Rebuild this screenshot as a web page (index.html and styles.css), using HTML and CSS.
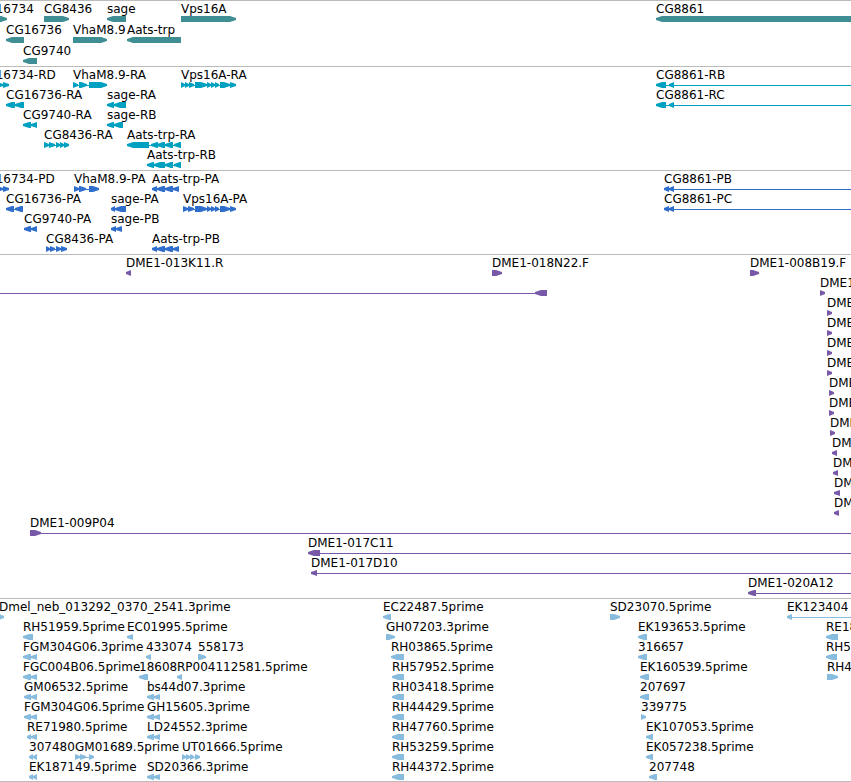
FILE: index.html
```html
<!DOCTYPE html>
<html lang="en">
<head>
<meta charset="utf-8">
<title>Genome browser</title>
<link rel="stylesheet" href="styles.css">
</head>
<body>
<main id="browser" class="browser"></main>
<script src="tracks.js"></script>
</body>
</html>
```
FILE: styles.css
```css
* {
  box-sizing: border-box;
}

body {
  margin: 0;
  background: #fff;
  color: #000;
  font: 12px/17px "DejaVu Sans", sans-serif;
}

.browser {
  overflow: hidden;
  border-bottom: 1px solid #bbb;
}

.track {
  border-top: 1px solid #bbb;
  padding-bottom: 3px;
}

.genes {
  color: #3f8e94;
  padding-bottom: 2px;
}

.transcripts {
  color: #00a0c0;
}

.proteins {
  color: #306ecb;
}

.clones {
  color: #7859a8;
}

.reads {
  color: #88bcde;
  padding-bottom: 2px;
}

.row {
  position: relative;
  height: 20px;
}

.genes .row {
  height: 21px;
}

/* Features sit at their own coordinate along the sequence. */
.feature {
  position: absolute;
  top: 0;
}

.label {
  display: block;
  height: 15px;
  color: #000;
  white-space: nowrap;
}

.glyph {
  display: block;
  height: 6px;
  fill: currentColor;
  overflow: hidden;
}
```
FILE: tracks.js
```js
// Feature: [name, strand, blocks, end of the connecting line (optional), start of the line (optional)]
const FAR = 2400;
const vps = [[195, 207], [207, 211], [211, 215], [215, 219], [220, 230], [230, 236]];
const aats = [[152, 157], [157, 165], [165, 173], [173, 179]];
const pair = [[147, 154], [154, 160]];
const rh = [[392, 404]];

const tracks = [
  { kind: "genes", rows: [
    [["CG16734", ">", [[-22, 7]]], ["CG8436", ">", [[44, 69]]], ["sage", "<", [[107, 126]]], ["Vps16A", ">", [[181, 236]]], ["CG8861", "<", [[656, FAR]]]],
    [["CG16736", "<", [[6, 24]]], ["VhaM8.9", ">", [[73, 107]]], ["Aats-trp", "<", [[127, 181]]]],
    [["CG9740", "<", [[23, 37]]]]
  ] },
  { kind: "transcripts", rows: [
    [["CG16734-RD", ">", [[-22, 3], [3, 9]]], ["VhaM8.9-RA", ">", [[73, 78], [79, 87], [89, 107]]], ["Vps16A-RA", ">", [[181, 185], [185, 189], [189, 194], ...vps]], ["CG8861-RB", "<", [[656, 666], [669, 674]], FAR]],
    [["CG16736-RA", "<", [[6, 15], [15, 24]]], ["sage-RA", "<", [[107, 114], [114, 126]]], ["CG8861-RC", "<", [[656, 666], [669, 674]], FAR]],
    [["CG9740-RA", "<", [[23, 31], [31, 37]]], ["sage-RB", "<", [[107, 114], [114, 123]]]],
    [["CG8436-RA", ">", [[44, 49], [49, 55], [56, 60], [60, 64], [64, 69]]], ["Aats-trp-RA", "<", [[127, 149], [151, 158], [157, 165], [165, 173], [174, 181]]]],
    [["Aats-trp-RB", "<", [[147, 154], [154, 165], [165, 173], [174, 181]]]]
  ] },
  { kind: "proteins", rows: [
    [["CG16734-PD", ">", [[-22, 3], [3, 9]]], ["VhaM8.9-PA", ">", [[74, 79], [79, 86], [89, 99]]], ["Aats-trp-PA", "<", aats], ["CG8861-PB", "<", [[664, 669], [669, 674]], FAR]],
    [["CG16736-PA", "<", [[6, 14], [15, 23]]], ["sage-PA", "<", [[111, 115], [115, 126]]], ["Vps16A-PA", ">", [[183, 188], [188, 194], ...vps]], ["CG8861-PC", "<", [[664, 669], [669, 674]], FAR]],
    [["CG9740-PA", "<", [[24, 31], [31, 37]]], ["sage-PB", "<", [[111, 116], [116, 122]]]],
    [["CG8436-PA", ">", [[46, 50], [50, 55], [56, 61], [61, 67]]], ["Aats-trp-PB", "<", aats]]
  ] },
  { kind: "clones", rows: [
    [["DME1-013K11.R", "<", [[126, 131]]], ["DME1-018N22.F", ">", [[492, 502]]], ["DME1-008B19.F", ">", [[750, 759]]]],
    [["", "<", [[535, 547]], 547, -10], ["DME1", ">", [[820, 825]]]],
    [["DME1", ">", [[827, 832]]]],
    [["DME1", ">", [[827, 832]]]],
    [["DME1", ">", [[827, 832]]]],
    [["DME1", ">", [[827, 832]]]],
    [["DME1", ">", [[829, 834]]]],
    [["DME1", ">", [[829, 834]]]],
    [["DME1", ">", [[830, 835]]]],
    [["DME1", "<", [[832, 837]]]],
    [["DME1", "<", [[833, 838]]]],
    [["DME1", "<", [[834, 840]]]],
    [["DME1", "<", [[834, 839]]]],
    [["DME1-009P04", ">", [[30, 41]], FAR]],
    [["DME1-017C11", "<", [[308, 320]], FAR]],
    [["DME1-017D10", "<", [[311, 317]], FAR]],
    [["DME1-020A12", "<", [[748, 756]], FAR]]
  ] },
  { kind: "reads", rows: [
    [["Dmel_neb_013292_0370_2541.3prime", ">", [[-1, 4]]], ["EC22487.5prime", "<", [[383, 391]]], ["SD23070.5prime", ">", [[610, 620]]], ["EK123404", "<", [[787, 792]], FAR]],
    [["RH51959.5prime", "<", [[23, 33]]], ["EC01995.5prime", "<", [[127, 133]]], ["GH07203.3prime", ">", [[386, 395]]], ["EK193653.5prime", "<", [[638, 647]]], ["RE18", "<", [[826, 838]]]],
    [["FGM304G06.3prime", "<", [[23, 31], [31, 37]]], ["433074", "<", [[146, 151]]], ["558173", ">", [[198, 206]]], ["RH03865.5prime", "<", [[391, 404]]], ["316657", "<", [[638, 647]]], ["RH5", "<", [[826, 837]]]],
    [["FGC004B06.5prime", "<", [[23, 31], [31, 37]]], ["18608", "<", [[139, 148]]], ["RP004112581.5prime", "<", [[177, 182]]], ["RH57952.5prime", "<", rh], ["EK160539.5prime", "<", [[640, 649]]], ["RH4", ">", [[827, 838]]]],
    [["GM06532.5prime", "<", [[24, 31], [31, 37]]], ["bs44d07.3prime", "<", pair], ["RH03418.5prime", "<", rh], ["207697", "<", [[640, 649]]]],
    [["FGM304G06.5prime", "<", [[24, 31], [31, 37]]], ["GH15605.3prime", "<", pair], ["RH44429.5prime", "<", rh], ["339775", ">", [[641, 646]]]],
    [["RE71980.5prime", "<", [[27, 31], [31, 37]]], ["LD24552.3prime", "<", pair], ["RH47760.5prime", "<", rh], ["EK107053.5prime", "<", [[646, 653]]]],
    [["307480", "<", [[29, 33], [33, 37]]], ["GM01689.5prime", ">", [[75, 80], [80, 86], [89, 94]]], ["UT01666.5prime", ">", [[182, 186], [186, 190], [190, 194], [195, 200]]], ["RH53259.5prime", "<", rh], ["EK057238.5prime", "<", [[646, 653]]]],
    [["EK187149.5prime", "<", [[29, 33], [33, 37]]], ["SD20366.3prime", "<", pair], ["RH44372.5prime", "<", rh], ["207748", "<", [[649, 657]]]]
  ] }
];

// A block is a bar whose end in the strand's direction tapers to a blunt point.
function blockPath(a, b, strand) {
  const head = Math.min(6, b - a);
  const [tip, back, step] = strand === "<" ? [a, b, 1] : [b, a, -1];
  const shoulder = tip + step * head;
  const middle = tip + step * head / 2;
  return `M${tip} 2L${middle} 1L${shoulder} 0H${back}V6H${shoulder}L${middle} 5L${tip} 4Z`;
}

function drawFeature([name, strand, blocks, lineEnd, lineStart]) {
  const start = lineStart ?? blocks[0][0];
  const end = lineEnd ?? blocks[blocks.length - 1][1];
  const width = end - start;
  const paths = blocks.map(([a, b]) => blockPath(a - start, b - start, strand)).join("");
  const line = blocks.length > 1 || lineEnd ? `M0 3H${width}V4H0Z` : "";
  return `<div class="feature" style="left:${start}px"><span class="label">${name}</span>` +
    `<svg class="glyph" width="${width}" height="6" aria-hidden="true"><path d="${paths}"/><path d="${line}"/></svg></div>`;
}

document.getElementById("browser").innerHTML = tracks.map(track =>
  `<section class="track ${track.kind}">` +
  track.rows.map(row => `<div class="row">${row.map(drawFeature).join("")}</div>`).join("") +
  "</section>"
).join("");
```
